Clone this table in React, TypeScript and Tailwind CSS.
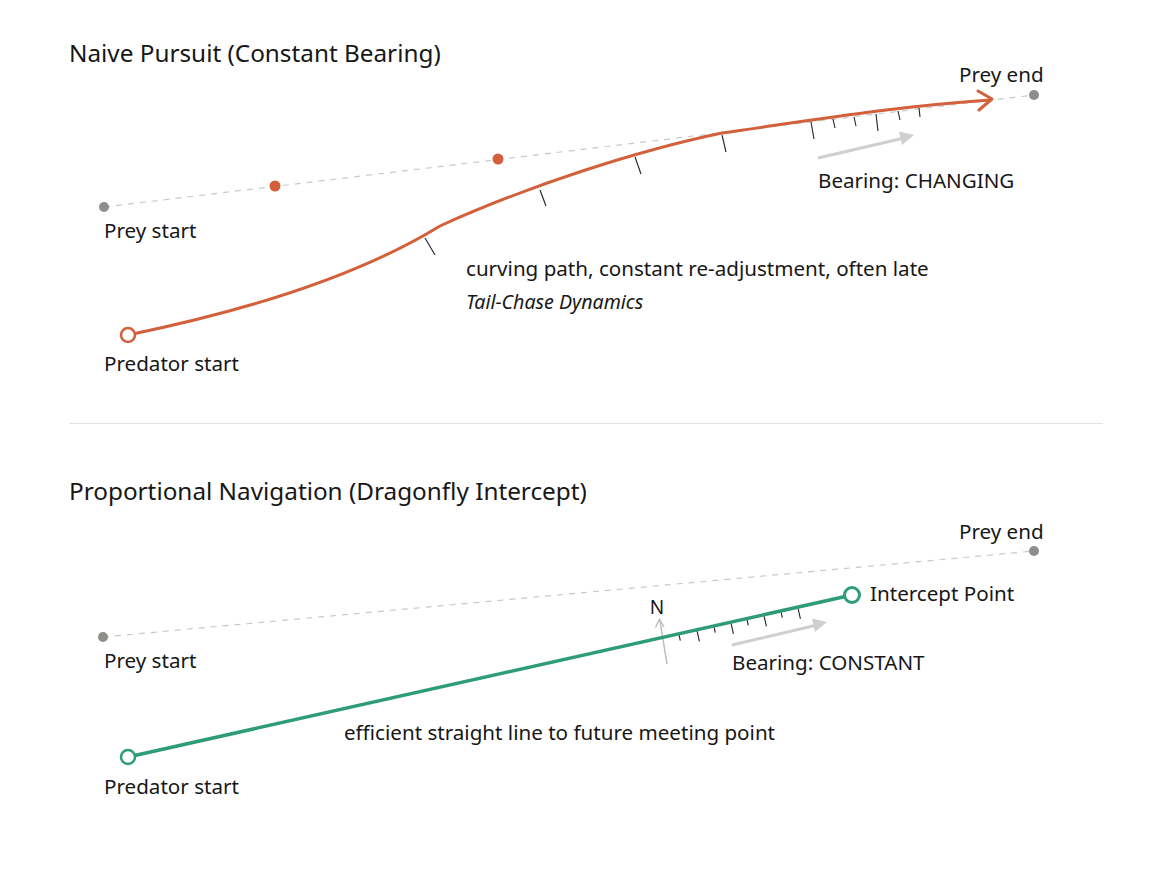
const ORANGE = "#d2603a";
const GREEN = "#2e9c78";
const PREY = "#8d8d89";
const DASH = "#c9c9c9";
const ARROW = "#cfcfcf";
const INK = "#171717";

type Seg = [number, number, number, number];

// ticks hanging off the pursuit path (page coordinates)
const pursuitTicks: Seg[] = [
  [425, 238, 435, 255],
  [540, 190, 546, 206],
  [635, 157, 641, 174],
  [722, 135, 726, 152],
  [811, 122, 814, 139],
  [833, 119, 835, 128],
  [854, 117, 856, 126],
  [876, 114, 878, 131],
  [898, 111, 900, 120],
  [919, 108, 920, 117],
];

// ticks on the intercept line
const interceptTicks: Seg[] = [679, 697, 714, 731, 747, 764, 781, 798].map((x, i) => {
  const y = 757 - (162 * (x - 128)) / 724 + 1;
  const len = i % 2 === 0 ? 6 : 11;
  return [x, y, x + 0.218 * len, y + 0.976 * len];
});

function Label({
  x,
  y,
  children,
  size = 20.6,
  italic = false,
  anchor = "start",
}: {
  x: number;
  y: number;
  children: React.ReactNode;
  size?: number;
  italic?: boolean;
  anchor?: "start" | "middle" | "end";
}) {
  return (
    <text
      x={x}
      y={y}
      fontSize={size}
      fill={INK}
      textAnchor={anchor}
      fontStyle={italic ? "italic" : "normal"}
    >
      {children}
    </text>
  );
}

function Ticks({ segs }: { segs: Seg[] }) {
  return (
    <g stroke="#222" strokeWidth={1.1}>
      {segs.map(([x1, y1, x2, y2], i) => (
        <line key={i} x1={x1} y1={y1} x2={x2} y2={y2} />
      ))}
    </g>
  );
}

function PursuitDiagram() {
  return (
    <svg
      className="block overflow-visible"
      width={1172}
      height={341}
      viewBox="0 69 1172 341"
      style={{ fontFamily: '"Noto Sans", "Open Sans", sans-serif' }}
    >
      <line x1={104} y1={207} x2={1034} y2={95} stroke={DASH} strokeWidth={1.2} strokeDasharray="6 6" />
      <circle cx={104} cy={207} r={5} fill={PREY} />
      <circle cx={1034} cy={95} r={5} fill={PREY} />
      <circle cx={275} cy={186} r={5.5} fill={ORANGE} />
      <circle cx={498} cy={159} r={5.5} fill={ORANGE} />

      <Ticks segs={pursuitTicks} />

      <path
        d="M128,335 C250,310 360,275 440,226 C530,185 640,150 722,133 C820,119 900,106 990,100"
        fill="none"
        stroke={ORANGE}
        strokeWidth={3}
        strokeLinecap="round"
      />
      <polyline
        points="978,91 992,99 979,110"
        fill="none"
        stroke={ORANGE}
        strokeWidth={3}
        strokeLinecap="round"
        strokeLinejoin="round"
      />
      <circle cx={128} cy={335} r={7} fill="#fff" stroke={ORANGE} strokeWidth={2.5} />

      <line x1={818} y1={158} x2={902} y2={138.5} stroke={ARROW} strokeWidth={3} />
      <polygon points="914,135 902,145 899,131.4" fill={ARROW} />

      <Label x={959} y={82}>Prey end</Label>
      <Label x={104} y={238}>Prey start</Label>
      <Label x={818} y={188}>Bearing: CHANGING</Label>
      <Label x={466} y={276}>curving path, constant re-adjustment, often late</Label>
      <Label x={466} y={309} size={19.6} italic>
        Tail-Chase Dynamics
      </Label>
      <Label x={104} y={371}>Predator start</Label>
    </svg>
  );
}

function InterceptDiagram() {
  return (
    <svg
      className="block overflow-visible"
      width={1172}
      height={389}
      viewBox="0 507 1172 389"
      style={{ fontFamily: '"Noto Sans", "Open Sans", sans-serif' }}
    >
      <line x1={103} y1={637} x2={1034} y2={551} stroke={DASH} strokeWidth={1.2} strokeDasharray="6 6" />
      <circle cx={103} cy={637} r={5} fill={PREY} />
      <circle cx={1034} cy={551} r={5} fill={PREY} />

      <line x1={667} y1={664} x2={660} y2={621} stroke="#bdbdbd" strokeWidth={1.5} />
      <polyline
        points="655.5,627.5 659.5,619 664,627"
        fill="none"
        stroke="#bdbdbd"
        strokeWidth={1.5}
        strokeLinejoin="round"
      />

      <Ticks segs={interceptTicks} />

      <line x1={128} y1={757} x2={852} y2={595} stroke={GREEN} strokeWidth={3.5} />
      <circle cx={128} cy={757} r={7} fill="#fff" stroke={GREEN} strokeWidth={2.5} />
      <circle cx={852} cy={595} r={7.5} fill="#fff" stroke={GREEN} strokeWidth={3} />

      <line x1={732} y1={645} x2={815} y2={625.5} stroke={ARROW} strokeWidth={3} />
      <polygon points="827,622 815,632 812,618.4" fill={ARROW} />

      <Label x={959} y={539}>Prey end</Label>
      <Label x={657} y={614} size={19} anchor="middle">
        N
      </Label>
      <Label x={870} y={601}>Intercept Point</Label>
      <Label x={104} y={668}>Prey start</Label>
      <Label x={732} y={670}>Bearing: CONSTANT</Label>
      <Label x={344} y={740}>efficient straight line to future meeting point</Label>
      <Label x={104} y={794}>Predator start</Label>
    </svg>
  );
}

/**
 * Pursuit strategy comparison: naive pursuit vs. proportional navigation
 */
export default function App() {
  return (
    <div className="min-h-[896px] w-[1172px] bg-white pt-[36px] text-[#171717] [font-family:'Noto_Sans','Open_Sans',sans-serif]">
      <h2 className="pl-[69px] text-[24.3px] font-normal leading-[33px]">Naive Pursuit (Constant Bearing)</h2>
      <PursuitDiagram />

      <div className="ml-[69px] mt-[13px] h-px w-[1034px] bg-[#e2e2e2]" />

      <h2 className="mt-[50px] pl-[69px] text-[24.3px] font-normal leading-[33px]">
        Proportional Navigation (Dragonfly Intercept)
      </h2>
      <InterceptDiagram />
    </div>
  );
}
